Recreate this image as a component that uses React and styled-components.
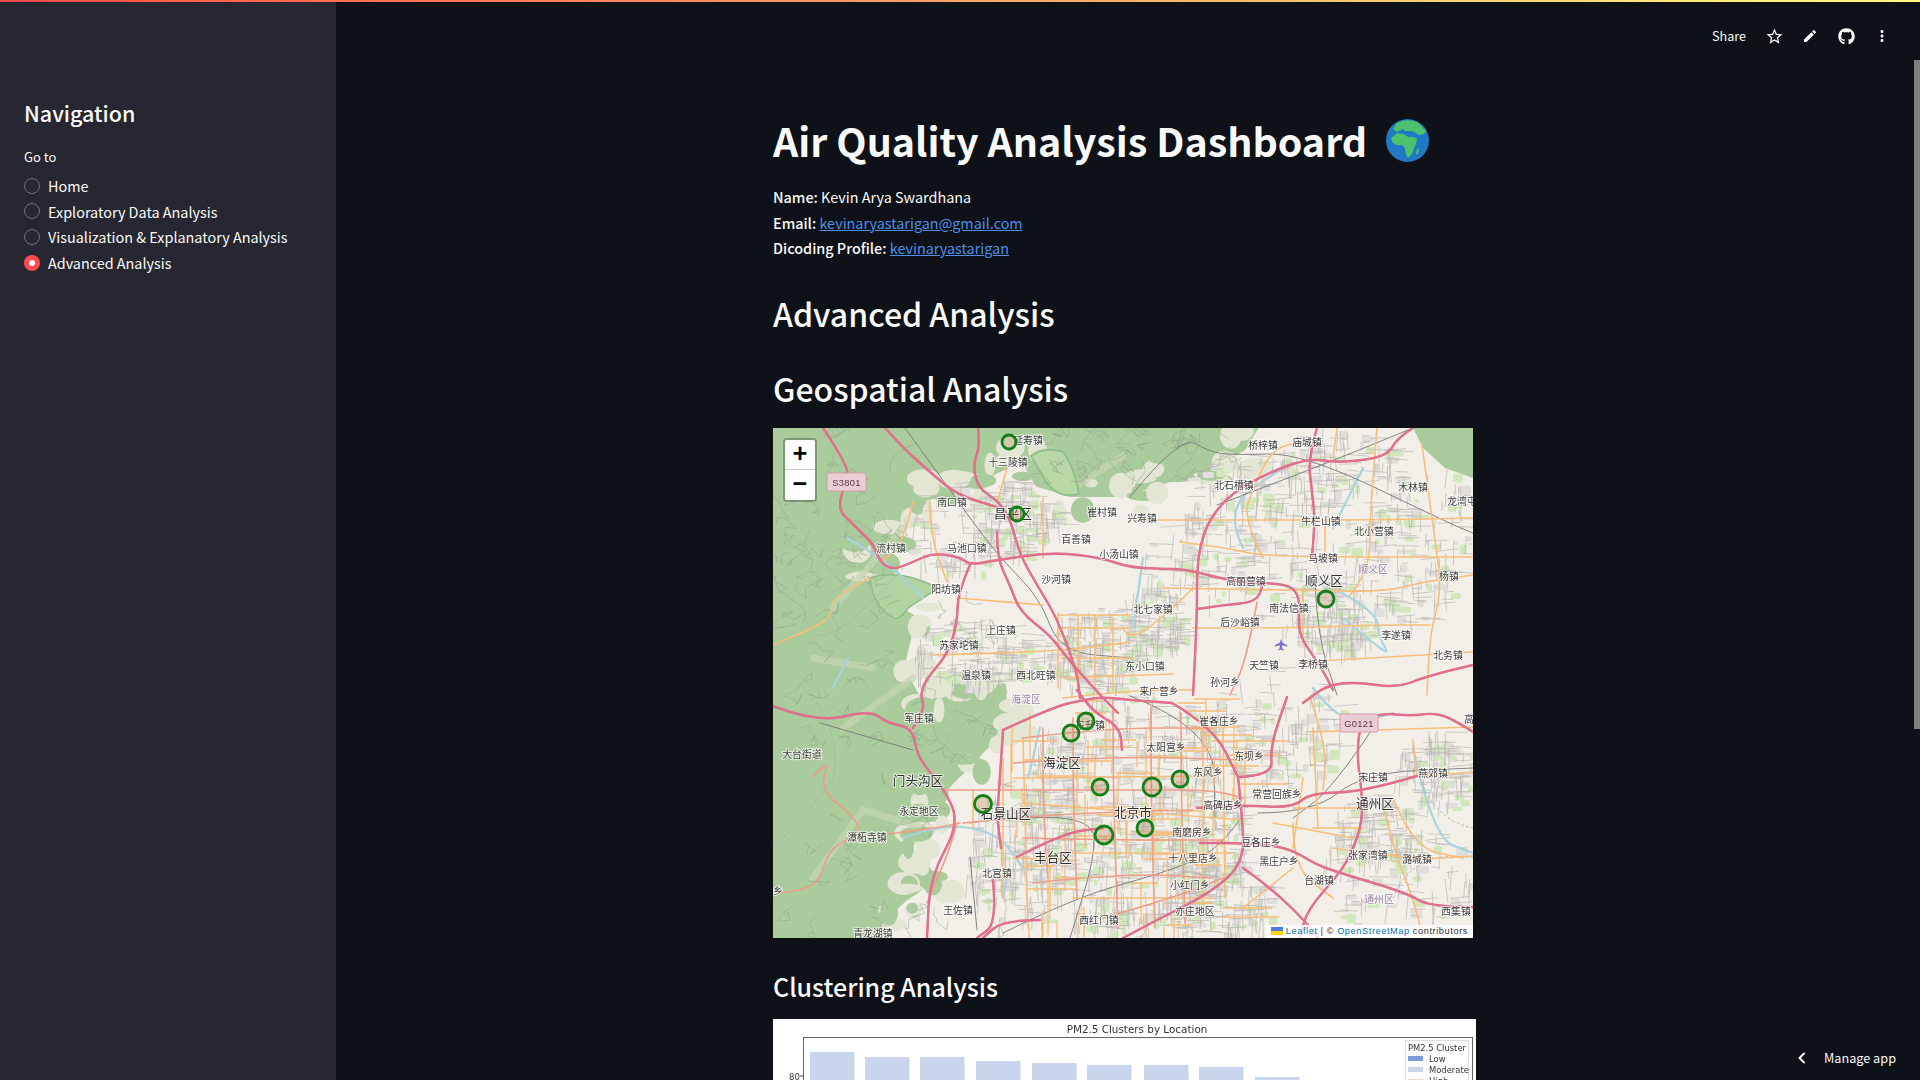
import React from 'react';
import styled, { createGlobalStyle } from 'styled-components';
import { FaGithub } from 'react-icons/fa';

const FONT = '"Noto Sans CJK SC", "Noto Sans", sans-serif';

const Global = createGlobalStyle`
  html, body { margin: 0; padding: 0; height: 100%; background: #0e1117; overflow: hidden; }
  #root { height: 100%; }
  * { box-sizing: border-box; }
`;

const Shell = styled.div`
  position: relative; display: flex; height: 100vh; width: 100%; overflow: hidden;
  font-family: ${FONT}; color: #fafafa; background: #0e1117;
`;
const Decoration = styled.div`
  position: absolute; top: 0; left: 0; right: 0; height: 2px; z-index: 5;
  background: linear-gradient(90deg, #ff4b4b, #fffd80);
`;
const Sidebar = styled.aside`
  flex: 0 0 336px; background: #262730; padding: 95px 24px 0 24px;
`;
const NavTitle = styled.h2`
  margin: 0; font-size: 21.5px; line-height: 36px; font-weight: 500; color: #fafafa;
`;
const GoTo = styled.div`
  margin-top: 16px; font-size: 13px; line-height: 20px; color: #fafafa;
`;
const RadioList = styled.div`
  margin-top: 6px; display: flex; flex-direction: column;
`;
const RadioRow = styled.div`
  display: flex; align-items: center; gap: 8px; height: 25.6px; font-size: 14.4px; color: #fafafa; white-space: nowrap;
`;
const RadioDot = styled.span`
  width: 16px; height: 16px; border-radius: 50%; flex: none;
  display: flex; align-items: center; justify-content: center;
  background: ${p => (p.$on ? '#ff4b4b' : '#262730')};
  border: ${p => (p.$on ? 'none' : '1px solid #71727a')};
  &::after { content: ''; display: ${p => (p.$on ? 'block' : 'none')}; width: 6px; height: 6px; border-radius: 50%; background: #fff; }
`;
const Main = styled.main`
  position: relative; flex: 1; min-width: 0; padding-right: 6px;
  display: flex; flex-direction: column; align-items: center; background: #0e1117;
`;
const TopActions = styled.div`
  position: absolute; top: 24px; right: 20px; display: flex; align-items: center; height: 24px; z-index: 3;
`;
const ShareText = styled.span`
  font-size: 12.6px; color: #fafafa; margin-right: 10px; line-height: 24px;
`;
const IconSlot = styled.span`
  width: 36px; display: flex; justify-content: center; color: #fafafa;
`;
const ScrollThumb = styled.div`
  position: absolute; right: 0; top: 60px; width: 6px; height: 669px; background: #7e7e80; z-index: 3;
`;
const Manage = styled.div`
  position: absolute; right: 24px; bottom: 12px; display: flex; align-items: center; gap: 16px;
  font-size: 12.7px; line-height: 20px; color: #fafafa; z-index: 4;
`;
const Column = styled.div`
  width: 704px; flex: none; padding-top: 114px;
`;
const Title = styled.h1`
  margin: 0; display: flex; align-items: center; gap: 19px;
  font-size: 39.4px; line-height: 52px; font-weight: 700; color: #fafafa; white-space: nowrap;
`;
const Profile = styled.div`
  margin-top: 18px; font-size: 14.4px; line-height: 25.6px; color: #fafafa;
  strong { font-weight: 500; }
`;
const PLink = styled.a`
  color: #4a90e8; text-decoration: underline;
`;
const H2 = styled.h2`
  margin: ${p => p.$mt}px 0 0; font-size: 32px; line-height: 50px; font-weight: 500; color: #fafafa;
`;
const H3 = styled.h3`
  margin: 28px 0 0; font-size: 25px; line-height: 40px; font-weight: 500; color: #fafafa;
`;
const MapBox = styled.div`
  position: relative; margin-top: 14.5px; width: 700px; height: 510px; overflow: hidden; background: #f2efe9;
`;
const MapSvg = styled.svg`
  display: block; width: 700px; height: 510px; filter: blur(0.45px);
`;
const ZoomBar = styled.div`
  position: absolute; left: 10px; top: 10px; border: 2px solid rgba(0,0,0,.25); border-radius: 4px;
  background-clip: padding-box; display: flex; flex-direction: column;
`;
const ZoomBtn = styled.div`
  width: 30px; height: 30px; background: #fff; color: #000; display: flex; align-items: center; justify-content: center;
  padding-top: 2px; font: bold 25px "Liberation Mono", monospace; border-bottom: ${p => (p.$first ? '1px solid #ccc' : 'none')};
  border-radius: ${p => (p.$first ? '2px 2px 0 0' : '0 0 2px 2px')};
`;
const Attribution = styled.div`
  position: absolute; right: 0; bottom: 0; height: 13px; padding: 0 5px; display: flex; align-items: center; gap: 3px;
  background: rgba(255,255,255,.8); color: #333; letter-spacing: .6px;
  font: 9.2px/13px "Liberation Sans", Arial, sans-serif; white-space: nowrap;
`;
const ALink = styled.span` color: #0078a8; `;
const ChartBox = styled.div`
  margin-top: 13px; width: 703px; height: 420px; background: #fff;
`;
const ChartSvg = styled.svg` display: block; width: 703px; height: 420px; filter: blur(0.25px); `;
const TownLabel = styled.text`
  font-family: ${FONT};
  font-size: ${p => (p.$kind === 'big' ? 12.6 : 9.9)}px;
  fill: ${p => (p.$kind === 'admin' ? '#9b7fa6' : p.$kind === 'big' ? '#2e2e2e' : '#3c3c3c')};
  stroke: rgba(255,255,255,.7); stroke-width: 2px; paint-order: stroke; text-anchor: middle; dominant-baseline: central;
`;
const ShieldText = styled.text`
  font: 9.4px "Liberation Sans", sans-serif; fill: #5a3a48; text-anchor: middle; dominant-baseline: central; letter-spacing: .3px;
`;
const ChartTitle = styled.text`
  font: 10.4px "DejaVu Sans", sans-serif; fill: #333; text-anchor: ${p => p.$anchor || 'middle'};
`;

/* ---------- map data ---------- */
const P = s => s.trim().split(/\s+/).map(t => t.split(',').map(Number));
const smooth = pts => {
  let d = `M${pts[0][0]} ${pts[0][1]}`;
  for (let i = 1; i < pts.length - 1; i++) {
    const mx = (pts[i][0] + pts[i + 1][0]) / 2, my = (pts[i][1] + pts[i + 1][1]) / 2;
    d += `Q${pts[i][0]} ${pts[i][1]} ${mx} ${my}`;
  }
  const l = pts[pts.length - 1];
  return d + `L${l[0]} ${l[1]}`;
};
const rng = seed => () => {
  seed |= 0; seed = (seed + 0x6d2b79f5) | 0;
  let t = Math.imul(seed ^ (seed >>> 15), 1 | seed);
  t = (t + Math.imul(t ^ (t >>> 7), 61 | t)) ^ t;
  return ((t ^ (t >>> 14)) >>> 0) / 4294967296;
};
const zones = [
  [360, 385, 115, 125, 620], [240, 90, 48, 38, 110], [200, 225, 60, 35, 130], [320, 220, 48, 42, 150],
  [555, 190, 42, 38, 110], [380, 190, 36, 32, 100], [600, 400, 42, 34, 100], [660, 340, 38, 38, 90],
  [245, 425, 55, 70, 170], [440, 470, 55, 42, 130], [560, 120, 110, 100, 170], [640, 110, 60, 90, 90],
  [480, 70, 80, 45, 80], [560, 30, 60, 30, 70], [500, 300, 70, 60, 120], [620, 450, 80, 55, 90], [180, 100, 50, 45, 70], [420, 130, 60, 40, 70],
];
const r1 = rng(11);
let minor = '';
const blocks = [];
const parks = [];
zones.forEach(([cx, cy, rx, ry, n]) => {
  for (let i = 0; i < n; i++) {
    const a = r1() * 6.283, k = Math.sqrt(r1());
    const x = cx + Math.cos(a) * rx * k, y = cy + Math.sin(a) * ry * k;
    const len = 6 + r1() * 20, tilt = (r1() - .5) * .25;
    const horiz = r1() > .5;
    const dx = horiz ? len : len * tilt, dy = horiz ? len * tilt : len;
    minor += `M${x.toFixed(1)} ${y.toFixed(1)}l${dx.toFixed(1)} ${dy.toFixed(1)}`;
    if (i % 4 === 0) blocks.push([x, y, 4 + r1() * 9, 3 + r1() * 7]);
    if (i % 5 === 0) parks.push([x + 6, y + 4, 3 + r1() * 9, 3 + r1() * 7]);
  }
});
/* orange street grid of the dense city */
const r3 = rng(23);
let city = '';
for (let i = 0; i < 90; i++) {
  const x = 235 + r3() * 240, y = 270 + r3() * 230, l = 20 + r3() * 45;
  city += r3() > .5 ? `M${x.toFixed(0)} ${y.toFixed(0)}h${l.toFixed(0)}` : `M${x.toFixed(0)} ${y.toFixed(0)}v${l.toFixed(0)}`;
}
const r2 = rng(5);
let wild = '';
for (let i = 0; i < 130; i++) {
  let x = r2() * 240, y = 90 + r2() * 420;
  if (i % 3 === 0) { x = 270 + r2() * 200; y = r2() * 60; }
  if (i % 7 === 0) { x = r2() * 130; y = r2() * 130; }
  wild += `M${x.toFixed(1)} ${y.toFixed(1)}`;
  for (let k = 0; k < 5; k++) {
    x += (r2() - .5) * 26; y += (r2() - .5) * 22;
    wild += `L${x.toFixed(1)} ${y.toFixed(1)}`;
  }
}
/* soft blobs that break up the hill edge */
const r4 = rng(41);
const edge = [];
P('250,30 218,45 190,62 150,70 128,100 100,130 108,170 140,190 128,240 150,280 182,268 230,258 232,298 192,340 162,370 148,400 135,420 162,450 132,470 110,490 300,66 350,66 400,50 442,36 470,20').forEach(([x, y]) => {
  for (let i = 0; i < 5; i++) {
    edge.push([x + (r4() - .5) * 44, y + (r4() - .5) * 44, 5 + r4() * 13, 4 + r4() * 9, r4() > .5]);
  }
});

const motorways = [
  '50,0 77,40 72,55 65,80 75,92 100,115 107,134 120,142 140,134 160,125 187,129 197,137 224,132 280,124 330,130 357,140 407,141 424,144 454,152 490,155 517,157 527,170 525,197 530,214 547,237 560,262',
  '205,0 207,17 200,37 205,60 224,72 237,90 247,127 264,157 284,190 304,244 307,270',
  '112,0 130,20 157,44 184,67 224,79',
  '224,104 224,130 237,157 247,184 277,207 294,230 327,267 345,285',
  '197,137 185,164 184,197 174,227 154,250 147,267 152,279 140,300',
  '-3,277 44,295 97,282 114,295 140,300 144,329 170,359 187,395 157,449 154,510',
  '544,0 535,30 539,64 542,90 539,130',
  '640,0 624,10 614,29 564,35 537,30 497,44 460,64 437,90 427,117 424,144 424,181 422,230 420,267',
  '700,237 657,247 624,260 584,254 554,257 530,275',
  '700,304 677,289 657,285 640,288 607,285 587,295 584,329 589,365 589,395 580,422 567,445 534,482 527,510',
  '700,479 657,479 634,465 567,445 544,437 514,419 470,415 427,415',
  '644,348 590,364 537,365 520,380 470,377 424,380',
  '465,349 500,348 497,319 514,269',
  '465,349 470,395 470,435 439,464 384,492 350,510',
  '470,440 497,459 534,495 545,510',
  '399,275 440,299 465,349',
  '230,302 227,349 224,389 228,420',
  '230,302 280,279 310,272 330,269 357,272 399,275',
  '304,262 317,282 347,299 349,322',
  '244,429 290,405 330,400',
  '220,452 224,495 204,510',
  '267,492 230,492 210,510',
  '424,181 450,177 484,174 490,155',
];
const salmon = [
  '40,349 57,329 47,362 77,385 90,405 57,419 47,452 30,462 4,465',
  '90,409 164,400 187,395',
  '170,362 230,362 300,362 360,362 440,362 470,370',
  '190,395 260,388 340,384 420,382',
  '154,475 174,429 184,395',
  '484,174 474,230 457,267',
  '270,300 270,360 272,410 275,450', '300,290 300,350 302,420 304,470', '340,270 340,340 342,420 345,500',
  '378,280 378,360 380,440 382,500', '408,285 408,350 410,430 412,495',
  '250,310 330,300 440,300', '240,335 340,328 470,332', '250,410 340,412 450,412', '260,455 350,445 440,450', '330,490 400,470 450,450',
];
const trunks = [
  '157,74 157,107 174,154', '140,74 130,117 107,134', '234,40 225,72', '97,150 57,170 60,187 40,200 0,217', '184,170 270,177',
  '157,227 284,224 357,214', '270,70 270,130', '285,185 285,260', '305,187 305,262', '322,187 322,262', '340,190 340,262',
  '285,187 357,187', '285,200 357,200', '290,230 357,230', '290,250 400,246',
  '357,92 480,92 600,92 700,90', '407,114 457,120 490,129 700,129', '390,160 530,162 610,164 650,154 700,147', '420,200 530,200 590,197 657,197',
  '530,234 700,224', '649,17 660,97 669,164 657,204 654,267', '604,0 597,84 597,130 587,154 577,167', '552,97 552,130', '564,0 560,30',
  '530,160 530,210', '537,304 700,299', '637,349 700,344', '537,269 554,319 550,362', '640,312 644,348', '350,200 357,215 400,180 420,160',
  '290,270 360,262 420,262', '240,430 300,432', '230,330 230,470', '250,310 255,500', '200,362 200,400', '430,300 430,480', '450,300 452,470',
  '240,350 440,348', '250,375 470,392', '300,425 460,425', '300,470 440,470', '520,380 590,380', '540,400 590,400', '500,395 580,410', '530,350 520,420',
  '620,370 640,420 690,430', '490,130 470,90 480,60 500,20 530,14',
  '560,420 640,432 700,428', '540,300 545,400', '520,395 520,440 560,470', '610,375 620,420 640,470 650,510', '470,480 520,440',
];
const rails = [
  '132,0 164,44 197,90 227,130 267,170 287,224 357,230', '357,69 407,7 437,24 460,27 530,25 680,97 700,105', '444,77 537,42 640,0',
  '542,157 545,210 564,267', '47,295 140,322', '197,395 230,389 320,390 322,429 297,510', '197,429 204,502',
  '230,505 300,470 390,445 440,425 470,388', '485,385 540,385 590,345 700,340', '357,268 440,300 442,390', '600,300 560,360 520,390',
];
const rivers = [
  '567,164 604,184 606,210 617,227 600,215 570,190', '74,110 110,130 150,170', '267,299 260,330 255,350', '234,449 230,470',
  '130,410 170,395 225,405 250,440', '540,260 570,300 620,285', '640,320 660,410 700,425', '470,120 450,80 510,40', '560,100 580,60 590,40',
  '370,130 360,200', '75,230 60,260',
];
const labels = [
  ['延寿镇', 255, 12], ['十三陵镇', 235, 34], ['南口镇', 179, 74], ['昌平区', 240, 84, 'big'], ['崔村镇', 329, 84], ['百善镇', 303, 111],
  ['流村镇', 118, 120], ['马池口镇', 194, 120], ['小汤山镇', 346, 126], ['沙河镇', 283, 151], ['阳坊镇', 173, 161], ['上庄镇', 228, 202],
  ['苏家坨镇', 186, 217], ['温泉镇', 203, 247], ['西北旺镇', 263, 247], ['东小口镇', 372, 238], ['桥梓镇', 490, 17], ['庙城镇', 534, 14],
  ['北石槽镇', 461, 57], ['木林镇', 640, 59], ['龙湾屯', 689, 73], ['兴寿镇', 369, 90], ['牛栏山镇', 548, 93], ['北小营镇', 601, 103],
  ['马坡镇', 550, 130], ['顺义区', 600, 141, 'admin'], ['顺义区', 551, 151, 'big'], ['杨镇', 676, 148], ['高丽营镇', 473, 153], ['南法信镇', 516, 180],
  ['北七家镇', 380, 181], ['后沙峪镇', 467, 194], ['李遂镇', 623, 207], ['北务镇', 675, 227], ['天竺镇', 491, 237], ['李桥镇', 540, 236],
  ['孙河乡', 452, 254], ['来广营乡', 386, 263], ['海淀区', 253, 271, 'admin'], ['军庄镇', 146, 290], ['大台街道', 29, 326], ['海淀区', 289, 333, 'big'],
  ['门头沟区', 145, 351, 'big'], ['永定地区', 146, 383], ['石景山区', 233, 384, 'big'], ['潭柘寺镇', 94, 409], ['丰台区', 280, 428, 'big'], ['北宫镇', 224, 445],
  ['王佐镇', 185, 482], ['西红门镇', 326, 492], ['青龙湖镇', 100, 505], ['北京市', 360, 383, 'big'], ['东升镇', 317, 297], ['崔各庄乡', 446, 293],
  ['太阳宫乡', 393, 319], ['东坝乡', 476, 328], ['东风乡', 435, 344], ['常营回族乡', 504, 366], ['高碑店乡', 450, 377], ['宋庄镇', 600, 349],
  ['燕郊镇', 660, 345], ['通州区', 602, 374, 'big'], ['南磨房乡', 419, 404], ['豆各庄乡', 488, 414], ['张家湾镇', 595, 427], ['潞城镇', 644, 431],
  ['十八里店乡', 420, 430], ['黑庄户乡', 506, 433], ['台湖镇', 546, 452], ['小红门乡', 417, 457], ['通州区', 606, 471, 'admin'], ['亦庄地区', 422, 483],
  ['西集镇', 683, 483], ['高', 696, 291], ['乡', 5, 463],
];
const markers = [[236, 14, 7], [244, 86, 7], [553, 171, 8], [313, 293, 8], [298, 305, 8], [327, 359, 8], [210, 376, 8.5], [331, 407, 9], [379, 359, 9], [407, 351, 8], [372, 400, 8]];

const GREEN1 = 'M0 0 L250 0 L250 30 L218 45 L190 62 L150 70 L128 100 L100 130 L108 170 L140 190 L128 240 L150 280 L182 268 L230 258 L232 298 L192 340 L162 370 L148 400 L135 420 L162 450 L132 470 L110 490 L100 510 L0 510 Z';
const GREEN2 = 'M250 0 L482 0 L470 20 L442 36 L400 50 L350 66 L300 66 L265 56 L250 30 Z';
const GREEN3 = 'M640 0 L700 0 L700 50 L672 40 L650 20 Z';

const Polys = ({ list, color, width, casing }) => (
  <>
    {casing && list.map((s, i) => <path key={`c${i}`} d={smooth(P(s))} fill="none" stroke={casing} strokeWidth={width + .7} strokeLinecap="round" strokeLinejoin="round" />)}
    {list.map((s, i) => <path key={i} d={smooth(P(s))} fill="none" stroke={color} strokeWidth={width} strokeLinecap="round" strokeLinejoin="round" />)}
  </>
);

const MapDrawing = () => (
  <MapSvg viewBox="0 0 700 510">
    <rect width="700" height="510" fill="#f2efe9" />
    <path d={GREEN1} fill="#aacb9c" stroke="#aacb9c" strokeWidth="6" strokeLinejoin="round" />
    <path d={GREEN2} fill="#aacb9c" stroke="#aacb9c" strokeWidth="6" strokeLinejoin="round" />
    <path d={GREEN3} fill="#aacb9c" />
    {edge.map(([x, y, w, h, g], i) => <ellipse key={i} cx={x} cy={y} rx={w} ry={h} fill={g ? '#aacb9c' : '#e4e6d4'} />)}
    <path d="M130 100 L60 180 M140 250 L70 300 M150 400 L90 382 L40 450 M300 60 L350 28 M100 240 L40 230" fill="none" stroke="#c4d6b2" strokeWidth="7" strokeLinecap="round" opacity=".7" />
    <path d="M258 28 Q270 18 290 24 Q302 40 306 66 Q285 72 272 52 Z" fill="#b9d8a6" stroke="#8fc08e" strokeWidth="2" />
    <path d="M97 150 Q125 140 165 160 Q150 170 135 180 Q125 195 118 188 Q100 178 97 150 Z" fill="#b2d3a2" stroke="#8fbf8a" strokeWidth="1.6" />
    {blocks.map(([x, y, w, h], i) => <rect key={i} x={x} y={y} width={w} height={h} rx="2" fill="#e0dedb" />)}
    {parks.map(([x, y, w, h], i) => <rect key={i} x={x} y={y} width={w} height={h} rx="2" fill="#d2e8bc" />)}
    <path d={wild} fill="none" stroke="#93a38c" strokeWidth=".5" />
    <path d={minor} fill="none" stroke="#bab6b2" strokeWidth=".7" />
    <Polys list={rivers} color="#aad3df" width={2.2} />
    <path d="M0 420 Q40 380 60 350 Q70 300 30 260 M130 140 Q60 220 40 205 M205 280 Q190 300 170 310 M640 320 Q650 390 700 400 M620 470 Q640 420 700 430" fill="none" stroke="#9aa" strokeWidth=".7" strokeDasharray="3 2" />
    <Polys list={rails} color="#777" width={.9} />
    <path d={city} fill="none" stroke="#f8bd78" strokeWidth="1.3" />
    <Polys list={trunks} color="#f8bd78" width={1.6} />
    <Polys list={salmon} color="#ee9d86" width={1.6} />
    <Polys list={motorways} color="#e4708c" width={1.7} casing="#d96a8a" />
    <rect x="54" y="45" width="39" height="18" rx="2" fill="#ebcdd5" stroke="#d59aaa" />
    <ShieldText x="73.5" y="54.5">S3801</ShieldText>
    <rect x="567" y="286" width="38" height="18" rx="2" fill="#ebcdd5" stroke="#d59aaa" />
    <ShieldText x="586" y="295.5">G0121</ShieldText>
    <path d="M508 211 l1.2 3.6 5 2.6 v1.2 l-5 -1.2 v3 l1.6 1.4 v.9 l-2.8 -.7 -2.8 .7 v-.9 l1.6 -1.4 v-3 l-5 1.2 v-1.2 l5 -2.6 z" fill="#7b6fd0" />
    {labels.map(([t, x, y, k], i) => <TownLabel key={i} x={x} y={y} $kind={k}>{t}</TownLabel>)}
    {markers.map(([x, y, r], i) => (
      <circle key={i} cx={x} cy={y} r={r} fill="rgba(170,120,60,.28)" stroke="#14801a" strokeWidth="2.8" />
    ))}
  </MapSvg>
);

const bars = [[810, 1052], [865, 1057], [920, 1057], [976, 1061], [1032, 1063], [1087, 1065], [1144, 1065], [1199, 1067], [1255, 1077]];

const ChartDrawing = () => (
  <ChartSvg viewBox="773 1019 703 420">
    <rect x="773" y="1019" width="703" height="420" fill="#fff" />
    <ChartTitle x="1137" y="1033">PM2.5 Clusters by Location</ChartTitle>
    <rect x="803.5" y="1037.5" width="669" height="390" fill="none" stroke="#666" strokeWidth="1" />
    {bars.map(([x, y], i) => <rect key={i} x={x} y={y} width="44.5" height={430} fill="#c9d5ec" />)}
    <line x1="800" x2="803" y1="1076" y2="1076" stroke="#444" />
    <ChartTitle x="800" y="1079.5" $anchor="end" style={{ fontSize: 8.6 }}>80</ChartTitle>
    <rect x="1405.5" y="1040.5" width="63" height="60" fill="#fff" stroke="#ddd" />
    <ChartTitle x="1437" y="1050.5" style={{ fontSize: 8.4 }}>PM2.5 Cluster</ChartTitle>
    <rect x="1408" y="1056" width="15" height="5" fill="#7f9bdc" />
    <ChartTitle x="1429" y="1061.5" $anchor="start" style={{ fontSize: 8.4 }}>Low</ChartTitle>
    <rect x="1408" y="1067" width="15" height="5" fill="#c9d5ec" />
    <ChartTitle x="1429" y="1072.5" $anchor="start" style={{ fontSize: 8.4 }}>Moderate</ChartTitle>
    <rect x="1408" y="1079" width="15" height="5" fill="#f5d2c8" />
    <ChartTitle x="1429" y="1084" $anchor="start" style={{ fontSize: 8.4 }}>High</ChartTitle>
  </ChartSvg>
);

const GlobeSvg = styled.svg` flex: none; `;
const Globe = () => (
  <GlobeSvg width="43" height="43" viewBox="0 0 43 43">
    <circle cx="21.5" cy="21.5" r="21.5" fill="#1f79c4" />
    <path d="M11 4 Q21 -1 32 3.5 L40 12 L38 15 L33 16 L30 14 L25 12 L19 12 L17 10 L11 13 L7 10 Z" fill="#4cc26c" />
    <path d="M5 19 L11 14 L18 15 L22 18 L28 18 L31 20 L30 25 L28 29 L26 35 L22 39 L20 36 L19 29 L16 26 L10 26 L6 23 Z" fill="#4cc26c" />
    <path d="M31 30 L33 29 L32 35 L30 35 Z" fill="#4cc26c" />
  </GlobeSvg>
);

const Icon = ({ d, size = 20 }) => (
  <svg width={size} height={size} viewBox="0 0 24 24" fill="currentColor"><path d={d} /></svg>
);

const NAV = ['Home', 'Exploratory Data Analysis', 'Visualization & Explanatory Analysis', 'Advanced Analysis'];

export default function App() {
  return (
    <Shell>
      <Global />
      <Decoration />
      <Sidebar>
        <NavTitle>Navigation</NavTitle>
        <GoTo>Go to</GoTo>
        <RadioList>
          {NAV.map((n, i) => (
            <RadioRow key={n}><RadioDot $on={i === 3} />{n}</RadioRow>
          ))}
        </RadioList>
      </Sidebar>
      <Main>
        <TopActions>
          <ShareText>Share</ShareText>
          <IconSlot><Icon size={19} d="M22 9.24l-7.19-.62L12 2 9.19 8.63 2 9.24l5.46 4.73L5.82 21 12 17.27 18.18 21l-1.63-7.03L22 9.24zM12 15.4l-3.76 2.27 1-4.28-3.32-2.88 4.38-.38L12 6.1l1.71 4.04 4.38.38-3.32 2.88 1 4.28L12 15.4z" /></IconSlot>
          <IconSlot><Icon size={16} d="M3 17.25V21h3.75L17.81 9.94l-3.75-3.75L3 17.25zM20.71 7.04c.39-.39.39-1.02 0-1.41l-2.34-2.34c-.39-.39-1.02-.39-1.41 0l-1.83 1.83 3.75 3.75 1.83-1.83z" /></IconSlot>
          <IconSlot><FaGithub size={17} /></IconSlot>
          <IconSlot><Icon size={18} d="M12 8c1.1 0 2-.9 2-2s-.9-2-2-2-2 .9-2 2 .9 2 2 2zm0 2c-1.1 0-2 .9-2 2s.9 2 2 2 2-.9 2-2-.9-2-2-2zm0 6c-1.1 0-2 .9-2 2s.9 2 2 2 2-.9 2-2-.9-2-2-2z" /></IconSlot>
        </TopActions>
        <ScrollThumb />
        <Column>
          <Title>Air Quality Analysis Dashboard <Globe /></Title>
          <Profile>
            <div><strong>Name:</strong> Kevin Arya Swardhana</div>
            <div><strong>Email:</strong> <PLink>kevinaryastarigan@gmail.com</PLink></div>
            <div><strong>Dicoding Profile:</strong> <PLink>kevinaryastarigan</PLink></div>
          </Profile>
          <H2 $mt={27.5}>Advanced Analysis</H2>
          <H2 $mt={25}>Geospatial Analysis</H2>
          <MapBox>
            <MapDrawing />
            <ZoomBar>
              <ZoomBtn $first>+</ZoomBtn>
              <ZoomBtn>−</ZoomBtn>
            </ZoomBar>
            <Attribution>
              <svg width="12" height="8" viewBox="0 0 12 8"><rect width="12" height="4" fill="#4C7BE1" /><rect y="4" width="12" height="4" fill="#FFD500" /></svg>
              <ALink>Leaflet</ALink> | © <ALink>OpenStreetMap</ALink> contributors
            </Attribution>
          </MapBox>
          <H3>Clustering Analysis</H3>
          <ChartBox><ChartDrawing /></ChartBox>
        </Column>
        <Manage>
          <svg width="12" height="12" viewBox="0 0 12 12" fill="none" stroke="#fafafa" strokeWidth="2" strokeLinecap="round" strokeLinejoin="round"><path d="M8 1.5 3.5 6 8 10.5" /></svg>
          <span>Manage app</span>
        </Manage>
      </Main>
    </Shell>
  );
}
